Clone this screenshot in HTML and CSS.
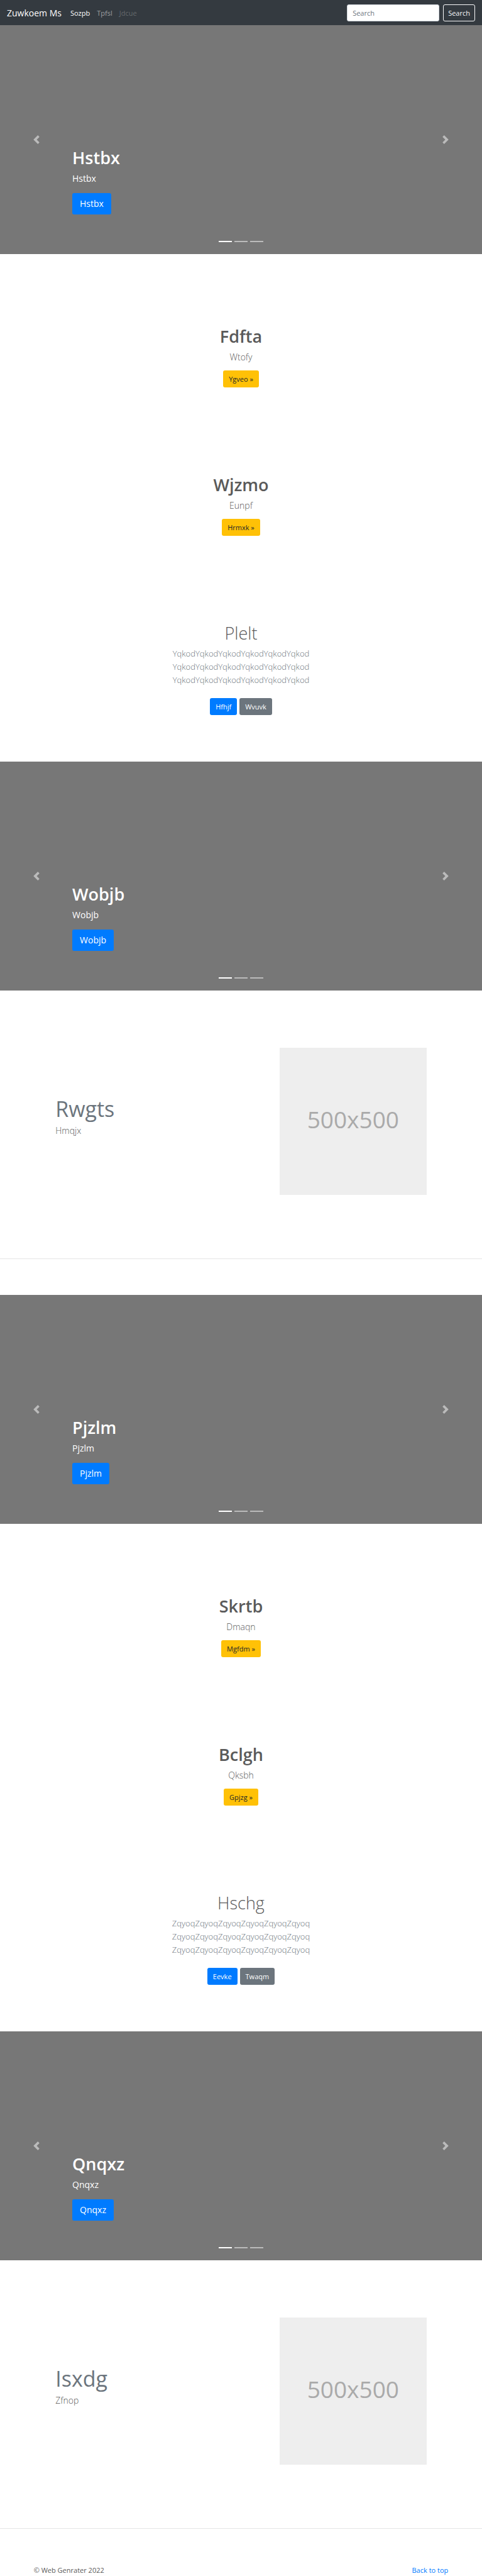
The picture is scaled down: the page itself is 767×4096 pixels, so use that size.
FILE: index.html
```html
<!DOCTYPE html>
<html lang="en">
<head>
<meta charset="utf-8">
<meta name="viewport" content="width=device-width, initial-scale=1">
<title>Zuwkoem Ms</title>
<link rel="stylesheet" href="styles.css">
</head>
<body>
<svg class="sprite" aria-hidden="true">
  <symbol id="prev" viewBox="0 0 8 8"><path d="M5.25 0l-4 4 4 4 1.5-1.5L4.25 4l2.5-2.5L5.25 0z"/></symbol>
  <symbol id="next" viewBox="0 0 8 8"><path d="M2.75 0l-1.5 1.5L3.75 4l-2.5 2.5L2.75 8l4-4-4-4z"/></symbol>
</svg>
<header class="navbar">
  <a class="brand" href="#">Zuwkoem Ms</a>
  <nav class="nav">
    <a class="nav-link active" href="#">Sozpb</a>
    <a class="nav-link" href="#">Tpfsl</a>
    <a class="nav-link disabled" href="#">Jdcue</a>
  </nav>
  <form class="search">
    <input class="search-input" type="search" placeholder="Search" aria-label="Search">
    <button class="search-button" type="button">Search</button>
  </form>
</header>
<main>
  <section class="carousel">
    <div class="caption">
      <h1 class="title">Hstbx</h1>
      <p class="caption-text">Hstbx</p>
      <a class="btn btn-large btn-primary" href="#">Hstbx</a>
    </div>
    <button class="control control-prev" type="button" aria-label="Previous"><svg class="arrow"><use href="#prev"/></svg></button>
    <button class="control control-next" type="button" aria-label="Next"><svg class="arrow"><use href="#next"/></svg></button>
    <div class="indicators"><span class="indicator current"></span><span class="indicator"></span><span class="indicator"></span></div>
  </section>

  <section class="marketing">
    <div class="item">
      <h2 class="title">Fdfta</h2>
      <p class="item-text">Wtofy</p>
      <a class="btn btn-warning" href="#">Ygveo »</a>
    </div>
    <div class="item">
      <h2 class="title">Wjzmo</h2>
      <p class="item-text">Eunpf</p>
      <a class="btn btn-warning" href="#">Hrmxk »</a>
    </div>
    <div class="item">
      <h2 class="title title-light">Plelt</h2>
      <p class="item-text intro">YqkodYqkodYqkodYqkodYqkodYqkod YqkodYqkodYqkodYqkodYqkodYqkod YqkodYqkodYqkodYqkodYqkodYqkod</p>
      <div class="actions">
        <a class="btn btn-primary" href="#">Hfhjf</a>
        <a class="btn btn-secondary" href="#">Wvuvk</a>
      </div>
    </div>
  </section>

  <section class="carousel">
    <div class="caption">
      <h1 class="title">Wobjb</h1>
      <p class="caption-text">Wobjb</p>
      <a class="btn btn-large btn-primary" href="#">Wobjb</a>
    </div>
    <button class="control control-prev" type="button" aria-label="Previous"><svg class="arrow"><use href="#prev"/></svg></button>
    <button class="control control-next" type="button" aria-label="Next"><svg class="arrow"><use href="#next"/></svg></button>
    <div class="indicators"><span class="indicator current"></span><span class="indicator"></span><span class="indicator"></span></div>
  </section>

  <section class="featurette">
    <div class="featurette-body">
      <h2 class="featurette-title">Rwgts</h2>
      <p class="item-text">Hmqjx</p>
    </div>
    <div class="placeholder">500x500</div>
  </section>
  <hr class="divider">

  <section class="carousel">
    <div class="caption">
      <h1 class="title">Pjzlm</h1>
      <p class="caption-text">Pjzlm</p>
      <a class="btn btn-large btn-primary" href="#">Pjzlm</a>
    </div>
    <button class="control control-prev" type="button" aria-label="Previous"><svg class="arrow"><use href="#prev"/></svg></button>
    <button class="control control-next" type="button" aria-label="Next"><svg class="arrow"><use href="#next"/></svg></button>
    <div class="indicators"><span class="indicator current"></span><span class="indicator"></span><span class="indicator"></span></div>
  </section>

  <section class="marketing">
    <div class="item">
      <h2 class="title">Skrtb</h2>
      <p class="item-text">Dmaqn</p>
      <a class="btn btn-warning" href="#">Mgfdm »</a>
    </div>
    <div class="item">
      <h2 class="title">Bclgh</h2>
      <p class="item-text">Qksbh</p>
      <a class="btn btn-warning" href="#">Gpjzg »</a>
    </div>
    <div class="item">
      <h2 class="title title-light">Hschg</h2>
      <p class="item-text intro">ZqyoqZqyoqZqyoqZqyoqZqyoqZqyoq ZqyoqZqyoqZqyoqZqyoqZqyoqZqyoq ZqyoqZqyoqZqyoqZqyoqZqyoqZqyoq</p>
      <div class="actions">
        <a class="btn btn-primary" href="#">Eevke</a>
        <a class="btn btn-secondary" href="#">Twaqm</a>
      </div>
    </div>
  </section>

  <section class="carousel">
    <div class="caption">
      <h1 class="title">Qnqxz</h1>
      <p class="caption-text">Qnqxz</p>
      <a class="btn btn-large btn-primary" href="#">Qnqxz</a>
    </div>
    <button class="control control-prev" type="button" aria-label="Previous"><svg class="arrow"><use href="#prev"/></svg></button>
    <button class="control control-next" type="button" aria-label="Next"><svg class="arrow"><use href="#next"/></svg></button>
    <div class="indicators"><span class="indicator current"></span><span class="indicator"></span><span class="indicator"></span></div>
  </section>

  <section class="featurette">
    <div class="featurette-body">
      <h2 class="featurette-title">Isxdg</h2>
      <p class="item-text">Zfnop</p>
    </div>
    <div class="placeholder">500x500</div>
  </section>
  <hr class="divider">
</main>
<footer class="footer">
  <span>© Web Genrater 2022</span>
  <a class="footer-link" href="#">Back to top</a>
</footer>
</body>
</html>
```
FILE: styles.css
```css
* { box-sizing: border-box; }

body {
  margin: 0;
  background: #fff;
  color: #5a5a5a;
  font: 400 11px/17px "Open Sans", "Noto Sans", sans-serif;
}

h1, h2, p { margin: 0; }
a { text-decoration: none; }
.sprite { display: none; }

/* Navigation bar */
.navbar {
  display: flex;
  align-items: center;
  height: 40px;
  padding: 0 11px;
  background: #343a40;
}
.brand {
  margin-right: 14px;
  color: #fff;
  font-size: 14px;
  line-height: 21px;
}
.nav { display: flex; gap: 11px; }
.nav-link { color: rgba(255, 255, 255, .5); }
.nav-link.active { color: #fff; }
.nav-link.disabled { color: rgba(255, 255, 255, .25); }
.search { display: flex; gap: 6px; margin-left: auto; }
.search-input {
  width: 147px;
  height: 27px;
  padding: 0 8px;
  border: 1px solid #ced4da;
  border-radius: 3px;
  background: #fff;
  font: inherit;
}
.search-input::placeholder { color: #6c757d; opacity: 1; }
.search-button {
  height: 27px;
  padding: 0 7px;
  border: 1px solid #f8f9fa;
  border-radius: 3px;
  background: transparent;
  color: #f8f9fa;
  font: inherit;
}

/* Shared text and buttons */
.title {
  margin-bottom: 5px;
  font-size: 27px;
  font-weight: 600;
  line-height: 34px;
}
.title-light { font-weight: 300; }
.btn {
  display: inline-block;
  padding: 5px 9px;
  border-radius: 3px;
}
.btn-large {
  padding: 6px 12px;
  font-size: 14px;
  line-height: 22px;
}
.btn-primary { background: #007bff; color: #fff; }
.btn-secondary { background: #6c757d; color: #fff; }
.btn-warning { background: #ffc107; color: #212529; }

/* Carousel */
.carousel {
  position: relative;
  display: flex;
  align-items: flex-end;
  height: 364px;
  padding: 0 15% 63px;
  background: #777;
  color: #fff;
}
.caption-text {
  margin-bottom: 13px;
  font-size: 14px;
  line-height: 21px;
}
.control {
  position: absolute;
  top: 0;
  bottom: 0;
  display: flex;
  align-items: center;
  justify-content: center;
  width: 15%;
  padding: 0;
  border: 0;
  background: none;
  opacity: .5;
}
.control-prev { left: 0; }
.control-next { right: 0; }
.arrow { width: 14px; height: 14px; fill: #fff; }
.indicators {
  position: absolute;
  right: 0;
  bottom: 19px;
  left: 0;
  display: flex;
  justify-content: center;
  gap: 4px;
}
.indicator {
  width: 21px;
  height: 2px;
  background: #fff;
  opacity: .5;
}
.indicator.current { opacity: 1; }

/* Centred text blocks */
.marketing {
  display: flex;
  flex-direction: column;
  gap: 138px;
  padding: 114px 53px 74px;
  text-align: center;
}
.item { display: flex; flex-direction: column; align-items: center; }
.item-text {
  font-size: 14px;
  font-weight: 300;
  line-height: 21px;
}
.item .item-text { margin-bottom: 11px; }
.item .intro {
  max-width: 50%;
  margin-bottom: 18px;
  color: #6c757d;
  font-size: 13px;
}
.actions { display: flex; gap: 4px; }

/* Text beside a picture */
.featurette {
  display: flex;
  align-items: center;
  justify-content: space-between;
  padding: 91px 11.5% 101px;
}
.featurette-body { padding-bottom: 16px; }
.featurette-title {
  margin-bottom: 2px;
  color: #6c757d;
  font-size: 34px;
  font-weight: 400;
  line-height: 43px;
}
.placeholder {
  display: flex;
  align-items: center;
  justify-content: center;
  width: 234px;
  aspect-ratio: 1;
  padding-bottom: 8px;
  background: #eee;
  color: #aaa;
  font-size: 37px;
}
.divider {
  height: 1px;
  margin: 0 0 57px;
  border: 0;
  background: #e5e5e5;
}

.footer {
  display: flex;
  justify-content: space-between;
  padding: 0 7%;
  line-height: 18px;
}
.footer-link { color: #007bff; }
```
